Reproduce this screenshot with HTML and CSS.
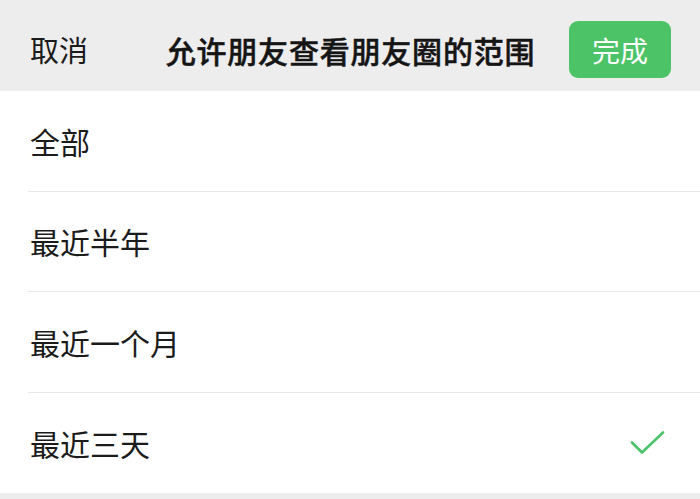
FILE: index.html
```html
<!DOCTYPE html>
<html lang="zh-CN">
<head>
<meta charset="utf-8">
<link rel="stylesheet" href="styles.css">
</head>
<body>
<div class="page">
  <header class="bar">
    <span class="cancel">取消</span>
    <h1 class="title">允许朋友查看朋友圈的范围</h1>
    <button class="done">完成</button>
  </header>
  <ul class="list">
    <li class="item"><span>全部</span></li>
    <li class="item"><span>最近半年</span></li>
    <li class="item"><span>最近一个月</span></li>
    <li class="item"><span>最近三天</span>
      <svg class="check" width="36" height="26" viewBox="0 0 36 26"><path d="M2 11.5 L12 21.5 L33 1.5" fill="none" stroke="#4cc26a" stroke-width="2.6" stroke-linecap="round" stroke-linejoin="round"/></svg>
    </li>
  </ul>
</div>
</body>
</html>
```
FILE: styles.css
```css
* { box-sizing: border-box; }
html, body { margin: 0; padding: 0; }
body {
  background: #ededed;
  font-family: "Noto Sans CJK SC", "Noto Sans", sans-serif;
  color: #1b1b1b;
  width: 700px;
  height: 499px;
  overflow: hidden;
}
.page { display: flex; flex-direction: column; }
.bar {
  height: 91px;
  padding: 8px 29px 0 30px;
  display: flex;
  align-items: center;
  justify-content: space-between;
  background: #ededed;
}
.cancel { font-size: 29px; line-height: 1; width: 102px; }
.title {
  margin: 0;
  font-size: 30px;
  font-weight: 500;
  line-height: 1;
  letter-spacing: 0.8px;
  color: #151515;
  -webkit-text-stroke: 0.5px #151515;
}
.done {
  width: 102px;
  height: 57px;
  border: none;
  border-radius: 9px;
  background: #4cc366;
  color: #fff;
  font-family: inherit;
  font-size: 28px;
  padding: 0;
  line-height: 1;
}
.list { list-style: none; margin: 0; padding: 0 0 0 28px; background: #fff; }
.item {
  height: 100.5px;
  display: flex;
  align-items: center;
  justify-content: space-between;
  padding: 0 34px 0 2px;
  border-bottom: 1px solid #e8e8e8;
  font-size: 30px;
  line-height: 1;
}
.item:last-child { border-bottom: none; }
.check { display: block; margin-top: 2px; }
```
